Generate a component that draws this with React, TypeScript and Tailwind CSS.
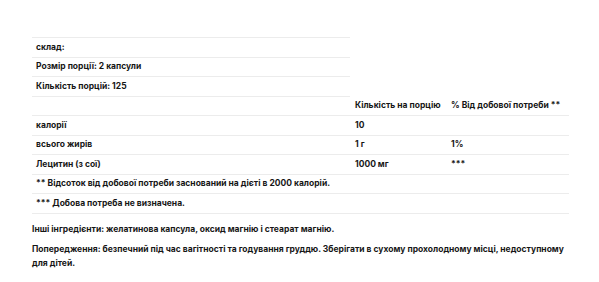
import React from "react";

const rowBase = "h-[19.5px] flex items-center border-b border-[#ececec]";
const grid = "h-[19.5px] grid grid-cols-[319px_96px_122px] items-center border-b border-[#ececec]";

export default function App() {
  return (
    <div
      className="w-[599px] h-[282px] bg-white text-[#161616] font-bold text-[8.5px]"
      style={{ fontFamily: "Inter, 'Noto Sans', sans-serif" }}
    >
      <div className="pl-[32px] pt-[37px]">
        <div className="w-[318px] border-t border-[#ececec]">
          <div className={rowBase}>
            <span className="pl-[4px]">склад:</span>
          </div>
          <div className={rowBase}>
            <span className="pl-[4px]">Розмір порції: 2 капсули</span>
          </div>
          <div className={rowBase}>
            <span className="pl-[4px]">Кількість порцій: 125</span>
          </div>
        </div>
        <div className="w-[537px]">
          <div className={grid}>
            <span></span>
            <span className="pl-[4px] whitespace-nowrap">Кількість на порцію</span>
            <span className="pl-[4px] whitespace-nowrap">% Від добової потреби **</span>
          </div>
          <div className={grid}>
            <span className="pl-[4px]">калорії</span>
            <span className="pl-[4px]">10</span>
            <span className="pl-[4px]"></span>
          </div>
          <div className={grid}>
            <span className="pl-[4px]">всього жирів</span>
            <span className="pl-[4px]">1 г</span>
            <span className="pl-[4px]">1%</span>
          </div>
          <div className={grid}>
            <span className="pl-[4px]">Лецитин (з сої)</span>
            <span className="pl-[4px]">1000 мг</span>
            <span className="pl-[4px]">***</span>
          </div>
          <div className={rowBase}>
            <span className="pl-[4px]">
              ** Відсоток від добової потреби заснований на дієті в 2000 калорій.
            </span>
          </div>
          <div className={rowBase}>
            <span className="pl-[4px]">*** Добова потреба не визначена.</span>
          </div>
        </div>
        <div className="w-[537px] pt-[8px]">
          <p className="leading-[14px] mb-[6px]">
            Інші інгредієнти: желатинова капсула, оксид магнію і стеарат магнію.
          </p>
          <p className="leading-[14px]">
            Попередження: безпечний під час вагітності та годування груддю. Зберігати в сухому
            прохолодному місці, недоступному для дітей.
          </p>
        </div>
      </div>
    </div>
  );
}
